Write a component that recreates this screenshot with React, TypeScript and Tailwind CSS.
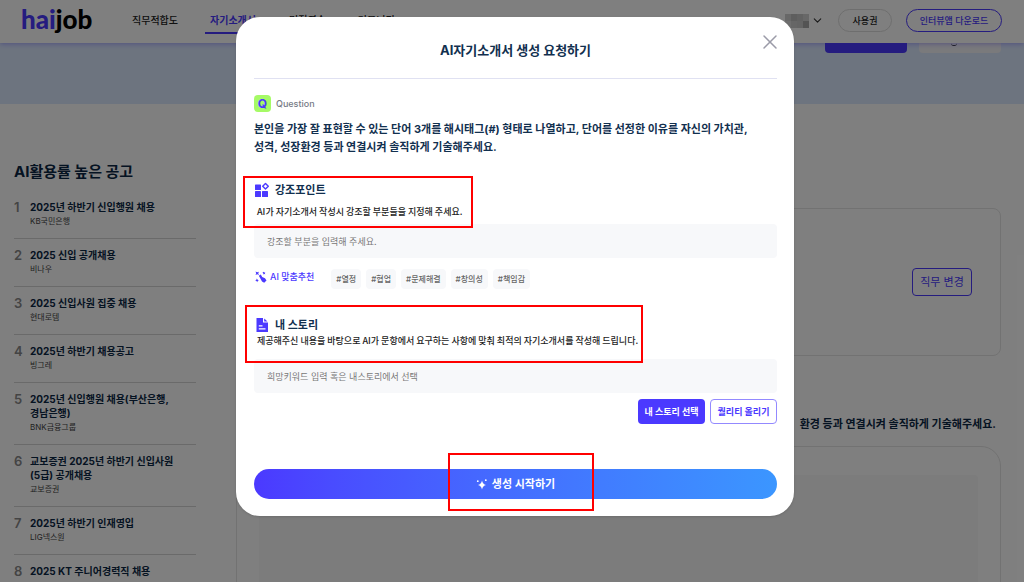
import { ChevronDown, X } from 'lucide-react';

const jobs = [
    { title: '2025년 하반기 신입행원 채용', company: 'KB국민은행' },
    { title: '2025 신입 공개채용', company: '비나우' },
    { title: '2025 신입사원 집중 채용', company: '현대로템' },
    { title: '2025년 하반기 채용공고', company: '빙그레' },
    { title: '2025년 신입행원 채용(부산은행, 경남은행)', company: 'BNK금융그룹' },
    { title: '교보증권 2025년 하반기 신입사원 (5급) 공개채용', company: '교보증권' },
    { title: '2025년 하반기 인재영입', company: 'LIG넥스원' },
    { title: '2025 KT 주니어경력직 채용', company: 'KT' },
];

const tags = ['#열정', '#협업', '#문제해결', '#창의성', '#책임감'];

function Logo() {
    return (
        <a href="#" className="w-[104px] shrink-0 pb-1 font-[Lato] text-[26px] leading-7 font-black text-black">
            <span className="text-[#4b39ff]">hai</span>job
        </a>
    );
}

function PointIcon() {
    return (
        <svg viewBox="0 0 16 16" className="size-4" fill="#4b39ff" aria-hidden="true">
            <rect x="1" y="2.5" width="6" height="5.5" rx="0.6" />
            <rect x="1" y="9" width="6" height="6" rx="0.6" />
            <rect x="8" y="9" width="6" height="6" rx="0.6" />
            <path d="M11.5 1.5 14.3 4.3 11.5 7.1 8.7 4.3Z" fill="none" stroke="#4b39ff" strokeWidth="1.4" strokeLinejoin="round" />
        </svg>
    );
}

function StoryIcon() {
    return (
        <svg viewBox="0 0 16 16" className="size-4" aria-hidden="true">
            <path d="M2.5 1H9V5.5H14V15H2.500Z" fill="#4b39ff" />
            <path d="M10.2 1.5 13.5 4.5H10.2Z" fill="#4b39ff" />
            <path d="M4.8 8.8H8.5M4.8 11.8H11.5" stroke="white" strokeWidth="1.2" />
        </svg>
    );
}

function WandIcon() {
    return (
        <svg viewBox="0 0 14 14" className="size-[14px]" fill="#4b39ff" aria-hidden="true">
            <path d="M4.8 5.8 6.8 4.6 8.2 7 11 8.3 12.5 10.5 10.2 12.8 8 11.5 6.5 8.8Z" />
            <path d="M1.5 1.5 3.2 2.2 5 1.8 4.2 3.3 5 5 3.2 4.3 1.5 5 2.2 3.3ZM9.5 1.8 10.2 2.6 11.3 2.3 10.8 3.3 11.3 4.3 10.2 4 9.3 4.6 9.4 3.5 8.5 2.8ZM2.8 8.5 3.6 9.8 4.8 10.2 3.7 11 3.2 12.2 2.5 11 1.2 10.6 2.4 9.8Z" />
        </svg>
    );
}

function SparkleIcon() {
    return (
        <svg viewBox="0 0 12 12" className="size-3" fill="white" aria-hidden="true">
            <path d="M6 2.5Q6.8 6.2 10 7 6.8 7.8 6 11.5 5.2 7.8 2 7 5.2 6.2 6 2.5Z" />
            <circle cx="1.8" cy="3.2" r="0.9" />
            <circle cx="9.8" cy="2.2" r="0.9" />
        </svg>
    );
}

function Header() {
    return (
        <header className="relative flex h-[43px] items-center bg-white pr-[22px] pb-[2px] pl-[21px] shadow-[0_1px_5px_rgba(75,57,255,0.4)]">
            <Logo />
            <nav className="flex flex-1 self-stretch text-[10px] font-medium text-[#222]">
                <a href="#" className="mr-5 flex items-center px-[7px]">직무적합도</a>
                <a href="#" className="mb-[7px] flex items-center border-b-2 border-[#4b39ff] px-[5px] pt-2 font-bold text-[#4b39ff]">자기소개서</a>
                <a href="#" className="ml-6 flex items-center px-1">면접연습</a>
                <a href="#" className="ml-6 flex items-center px-1">커뮤니티</a>
            </nav>
            <div className="flex items-center">
                <div className="mr-[2px] grid grid-cols-4" aria-hidden="true">
                    <span className="h-[7px] w-[6px] bg-[#d0d0d0]" />
                    <span className="h-[7px] w-[6px] bg-[#bcbcbc]" />
                    <span className="h-[7px] w-[6px] bg-[#c4c4c4]" />
                    <span className="h-[7px] w-[6px] bg-[#d0d0d0]" />
                    <span className="h-[7px] w-[6px] bg-[#ddd]" />
                    <span className="h-[7px] w-[6px] bg-[#ccc]" />
                    <span className="h-[7px] w-[6px] bg-[#c8c8c8]" />
                    <span className="h-[7px] w-[6px] bg-[#a8a8a8]" />
                </div>
                <ChevronDown className="mr-[14px] size-[13px] text-[#333]" />
                <button className="mr-[14px] h-[23px] w-[54px] rounded-full border border-[#ddd] text-[9px] font-medium text-[#222]">사용권</button>
                <button className="h-[23px] w-24 rounded-full border border-[#4b39ff] text-[9px] font-medium text-[#4b39ff]">인터뷰앱 다운로드</button>
            </div>
        </header>
    );
}

function JobRanking() {
    return (
        <aside className="w-[182px] shrink-0 pt-14">
            <h2 className="text-[15px] leading-6 font-bold text-[#0b2744]">AI활용률 높은 공고</h2>
            <ol className="mt-4">
                {jobs.map((job, i) => (
                    <li key={job.title} className="mb-[9px] flex border-b border-[#d5d5d5] pb-[10px]">
                        <span className="w-4 shrink-0 text-[13px] leading-[14px] font-semibold text-[#888]">{i + 1}</span>
                        <div className="min-w-0 pr-3">
                            <p className="text-[10px] leading-[14px] font-bold text-[#0b2744]">{job.title}</p>
                            <p className="text-[8px] leading-[14px] text-[#444]">{job.company}</p>
                        </div>
                    </li>
                ))}
            </ol>
        </aside>
    );
}

function Page() {
    return (
        <div className="h-screen overflow-hidden bg-white">
            <Header />
            <div className="flex h-[61px] justify-end gap-3 bg-[#dbe8ff] pr-[23px]">
                <div className="h-[10px] w-[82px] rounded-b bg-[#4b39ff]" />
                <div className="flex h-[10px] w-[82px] justify-center rounded-b bg-[#f4f4f8] pr-[13px]">
                    <span className="h-[3px] w-[6px] rounded-b-full border-b border-[#333]" />
                </div>
            </div>
            <div className="flex gap-10 pr-[23px] pl-[14px]">
                <JobRanking />
                <main className="min-w-0 flex-1 pt-[104px]">
                    <section className="flex h-[148px] items-center justify-end rounded-lg border border-[#e4e4e4] pr-7">
                        <button className="h-7 w-[60px] rounded border border-[#4b39ff] text-[11px] text-[#4b39ff]">직무 변경</button>
                    </section>
                    <p className="mt-[59px] mr-[5px] text-right text-[11px] leading-[18px] font-bold text-[#0b2744]">
                        환경 등과 연결시켜 솔직하게 기술해주세요.
                    </p>
                    <section className="mt-[13px] h-60 rounded-[20px] border border-[#e4e4e4] px-[22px] pt-7">
                        <div className="h-52 rounded bg-[#f8f8f8]" />
                    </section>
                </main>
            </div>
        </div>
    );
}

function RequestDialog() {
    return (
        <div role="dialog" aria-labelledby="dialog-title" className="relative w-[558px] rounded-[24px] bg-white pr-[17px] pb-[17px] pl-[18px] shadow-sm">
            <button aria-label="닫기" className="absolute top-[13px] right-3 text-[#9b9ba8]">
                <X className="size-6" strokeWidth={1.5} />
            </button>
            <h1 id="dialog-title" className="border-b border-[#e0e1f2] pt-6 pb-[19px] text-center text-[13px] leading-[18px] font-bold text-[#12304f]">
                AI자기소개서 생성 요청하기
            </h1>
            <div className="mt-4 flex items-center gap-[5px]">
                <span className="flex size-[17px] items-center justify-center rounded-sm bg-[#a6fa66] text-xs font-bold text-[#4b39ff]">Q</span>
                <span className="text-[9px] font-medium text-[#777b86]">Question</span>
            </div>
            <p className="mt-2 pr-4 text-[11px] leading-[18px] font-bold text-[#12304f]">
                본인을 가장 잘 표현할 수 있는 단어 3개를 해시태그(#) 형태로 나열하고, 단어를 선정한 이유를 자신의 가치관, 성격, 성장환경 등과 연결시켜 솔직하게 기술해주세요.
            </p>

            <div className="relative mt-[26px]">
                <div className="absolute -top-[6px] -left-[11px] h-[52px] w-[230px] border-2 border-[#f00]" />
                <label htmlFor="point" className="flex items-center gap-[5px] text-[11px] leading-4 font-bold text-[#12304f]">
                    <PointIcon />
                    강조포인트
                </label>
                <p className="mt-[6px] pl-[3px] font-['Noto_Sans_CJK_KR',sans-serif] text-[9px] leading-4 font-medium text-[#222]">
                    AI가 자기소개서 작성시 강조할 부분들을 지정해 주세요.
                </p>
            </div>
            <input id="point" placeholder="강조할 부분을 입력해 주세요." className="mt-1 block h-[34px] w-full rounded bg-[#f7f8fa] px-[13px] text-[9px] placeholder:text-[#777]" />
            <div className="mt-[11px] flex items-center gap-[5px]">
                <span className="mr-3 flex items-center gap-[2px] pb-1 text-[9px] font-medium text-[#4b39ff]">
                    <WandIcon />
                    AI 맞춤추천
                </span>
                {tags.map((tag) => (
                    <button key={tag} className="h-5 rounded-sm bg-[#f7f8fa] px-[5px] text-[8px] font-medium text-[#666]">{tag}</button>
                ))}
            </div>

            <div className="relative mt-7">
                <div className="absolute -top-3 -left-[9px] h-[58px] w-[398px] border-2 border-[#f00]" />
                <label htmlFor="story" className="flex items-center gap-[5px] text-[11px] leading-4 font-bold text-[#12304f]">
                    <StoryIcon />
                    내 스토리
                </label>
                <p className="pl-[3px] font-['Noto_Sans_CJK_KR',sans-serif] text-[9px] leading-4 font-medium text-[#222]">
                    제공해주신 내용을 바탕으로 AI가 문항에서 요구하는 사항에 맞춰 최적의 자기소개서를 작성해 드립니다.
                </p>
            </div>
            <input id="story" placeholder="희망키워드 입력 혹은 내스토리에서 선택" className="mt-[10px] block h-[34px] w-full rounded bg-[#f7f8fa] px-[13px] text-[9px] placeholder:text-[#777]" />
            <div className="mt-[6px] flex justify-end gap-[5px]">
                <button className="h-[25px] w-[67px] rounded bg-[#4b39ff] text-[9px] font-bold text-white">내 스토리 선택</button>
                <button className="h-[25px] w-[67px] rounded border border-[#9389ff] text-[9px] font-bold text-[#4b39ff]">퀄리티 올리기</button>
            </div>

            <div className="relative mt-[45px]">
                <button className="flex h-[30px] w-full items-center justify-center gap-1 rounded-full bg-linear-to-r from-[#4b39ff] to-[#3b96ff] text-[11px] font-bold text-white">
                    <SparkleIcon />
                    생성 시작하기
                </button>
                <div className="pointer-events-none absolute -top-4 left-[194px] h-[58px] w-[146px] border-2 border-[#f00]" />
            </div>
        </div>
    );
}

export default function App() {
    return (
        <div className="relative font-[Inter,'Noto_Sans_CJK_KR',sans-serif] break-keep">
            <Page />
            <div className="absolute inset-0 flex items-start justify-center bg-black/50 pt-[17px] pl-[6px]">
                <RequestDialog />
            </div>
        </div>
    );
}
